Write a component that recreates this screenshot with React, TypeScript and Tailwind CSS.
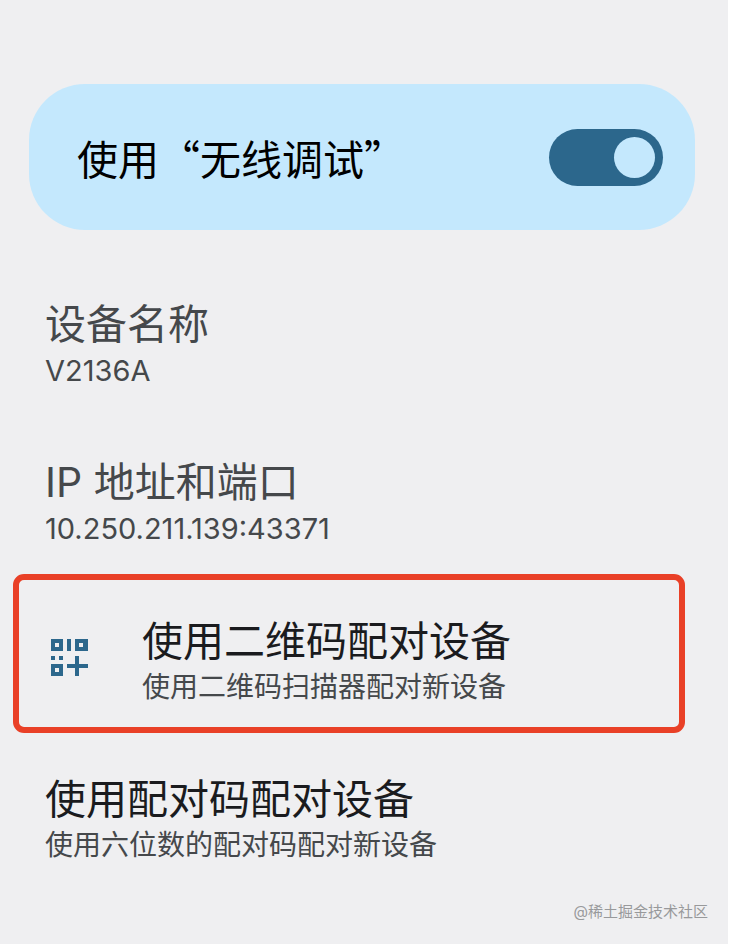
import { useState } from "react";

function QrAddIcon() {
  return (
    <svg className="h-10 w-10 shrink-0" viewBox="0 0 40 40" fill="#2c678c" aria-hidden>
      <path fillRule="evenodd" d="M2 2h12v12H2zM6 6v4h4V6z" />
      <path d="M18 2h4v12h-4z" />
      <path fillRule="evenodd" d="M26 2h13v12H26zM30 6v4h4V6z" />
      <path d="M2 19h4v4H2zM10 19h4v4h-4z" />
      <path fillRule="evenodd" d="M2 27h12v12H2zM6 31v4h4v-4z" />
      <path d="M26 19h4v8h9v4h-9v8h-4v-8h-8v-4h8z" />
    </svg>
  );
}

function InfoRow({ title, value }: { title: string; value: string }) {
  return (
    <div className="text-[#45484b]">
      <dt className="text-[41px] leading-[52px]">{title}</dt>
      <dd className="text-[29px] leading-[42px]">{value}</dd>
    </div>
  );
}

function ActionText({ title, summary }: { title: string; summary: string }) {
  return (
    <span className="flex flex-col">
      <span className="text-[41px] leading-[52px] text-[#1a1b1e]">{title}</span>
      <span className="text-[28px] leading-10 text-[#45484b]">{summary}</span>
    </span>
  );
}

export default function App() {
  const [enabled, setEnabled] = useState(true);

  return (
    <div className="min-h-screen bg-white pr-1">
      <main
        lang="zh-CN"
        className="flex min-h-screen flex-col bg-[#efeff1] pt-[84px] font-['Inter','Noto_Sans_CJK_SC',sans-serif]"
      >
        <label className="relative mr-[33px] ml-[29px] flex cursor-pointer items-center justify-between rounded-[56px] bg-[#c4e8fd] py-11 pr-8 pl-12 text-black">
          <span className="font-['Noto_Sans_CJK_SC',sans-serif] text-[41px] leading-[58px]">使用“无线调试”</span>
          <input
            type="checkbox"
            role="switch"
            checked={enabled}
            onChange={(e) => setEnabled(e.target.checked)}
            className="peer sr-only"
          />
          <span className="flex h-[57px] w-[114px] shrink-0 items-center rounded-full bg-[#2c678c] px-2 peer-checked:justify-end">
            <span className="h-[41px] w-[41px] rounded-full bg-[#c4e8fd]" />
          </span>
        </label>

        <dl className="mt-[68px] flex flex-col gap-16 px-[45px]">
          <InfoRow title="设备名称" value="V2136A" />
          <InfoRow title="IP 地址和端口" value="10.250.211.139:43371" />
        </dl>

        <button
          type="button"
          className="mt-6 mr-[43px] ml-[13px] flex cursor-pointer items-center gap-[53px] rounded-[11px] border-6 border-[#e94027] pt-[27px] pb-5 pl-[30px] text-left"
        >
          <QrAddIcon />
          <span className="pt-2">
            <ActionText title="使用二维码配对设备" summary="使用二维码扫描器配对新设备" />
          </span>
        </button>

        <button type="button" className="mt-10 cursor-pointer px-[45px] text-left">
          <ActionText title="使用配对码配对设备" summary="使用六位数的配对码配对新设备" />
        </button>

        <footer className="mt-auto pr-5 pb-5 text-right text-[15px] leading-6 text-[#98999b]">
          @稀土掘金技术社区
        </footer>
      </main>
    </div>
  );
}
